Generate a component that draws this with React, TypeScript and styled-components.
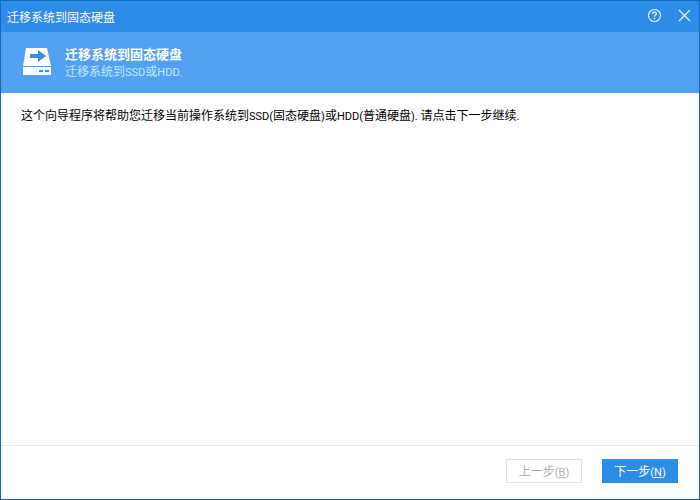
import React from 'react';
import styled, { createGlobalStyle } from 'styled-components';

const GlobalStyle = createGlobalStyle`
  *, *::before, *::after { box-sizing: border-box; }
  body {
    margin: 0;
    font-family: 'Noto Sans CJK SC', sans-serif;
    font-size: 12px;
    line-height: 16px;
    color: #000;
    background: #fff;
  }
`;

const Dialog = styled.div`
  display: flex;
  flex-direction: column;
  min-height: 100vh;
  border: 1px solid #0f69b4;
  background: #fff;
`;

const TitleBar = styled.header`
  display: flex;
  align-items: center;
  justify-content: space-between;
  height: 31px;
  padding: 0 7px 0 6px;
  background: #2d8ce7;
  color: #fff;
`;

const WindowTitle = styled.h1`
  margin: 0;
  font-size: 12px;
  font-weight: 400;
`;

const WindowControls = styled.div`
  display: flex;
  gap: 15px;
  padding-bottom: 2px;
`;

const IconButton = styled.button`
  display: flex;
  padding: 0;
  border: 0;
  background: none;
  color: #e4f7ff;
`;

const Banner = styled.section`
  display: flex;
  align-items: center;
  gap: 14px;
  height: 61px;
  padding: 0 21px;
  background: #52a0f2;
`;

const BannerText = styled.div`
  padding-top: 2px;
`;

const BannerTitle = styled.h2`
  margin: 0;
  font-size: 13px;
  line-height: 16px;
  font-weight: 700;
  color: #fff;
`;

const BannerNote = styled.p`
  margin: 0;
  line-height: 18px;
  color: #c0e9ff;
`;

const Latin = styled.span`
  font-family: Roboto, sans-serif;
  font-size: 11px;
`;

const Content = styled.main`
  flex: 1;
  padding: 14px 20px;
`;

const Message = styled.p`
  margin: 0;
`;

const Footer = styled.footer`
  display: flex;
  justify-content: flex-end;
  gap: 20px;
  padding: 13px 21px 16px;
  border-top: 1px solid #e5e8ea;
`;

const StepButton = styled.button<{ $primary?: boolean }>`
  min-width: 76px;
  height: 24px;
  padding: 2px 8px 0;
  border: 1px solid ${(p) => (p.$primary ? '#2d8ce7' : '#dfe3e8')};
  background: ${(p) => (p.$primary ? '#2d8ce7' : '#fff')};
  color: ${(p) => (p.$primary ? '#fff' : '#b0b0b0')};
  font: inherit;
`;

const HelpIcon = () => (
  <svg width="15" height="15" viewBox="0 0 15 15" fill="none" stroke="currentColor" aria-hidden="true">
    <circle cx="7.5" cy="7.5" r="6" strokeWidth="1.2" />
    <path d="M5.6 6V5.7C5.6 4.6 6.4 4.1 7.5 4.1s1.9.6 1.9 1.6c0 1.4-1.9 1.3-1.9 3" strokeWidth="1.4" />
    <path d="M7.5 9.7v1.4" strokeWidth="1.5" />
  </svg>
);

const CloseIcon = () => (
  <svg width="15" height="15" viewBox="0 0 15 15" fill="none" stroke="currentColor" strokeWidth="1.3" aria-hidden="true">
    <path d="M2 2l11 11M13 2l-11 11" />
  </svg>
);

const DriveIcon = () => (
  <svg width="29" height="29" viewBox="0 0 29 29" aria-hidden="true">
    <path d="M4 0h21l4 18H1z" fill="#fff" />
    <path d="M1 19h28v8H1z" fill="#fff" />
    <path d="M8 6h8V2l8 6-8 6v-4H8z" fill="#3c8ee0" />
    <path d="M17 22h4v2h-4zM23 22h4v2h-4z" fill="#3c8ee0" />
  </svg>
);

export default function App() {
  return (
    <>
      <GlobalStyle />
      <Dialog role="dialog" aria-labelledby="window-title">
        <TitleBar>
          <WindowTitle id="window-title">迁移系统到固态硬盘</WindowTitle>
          <WindowControls>
            <IconButton type="button" aria-label="帮助"><HelpIcon /></IconButton>
            <IconButton type="button" aria-label="关闭"><CloseIcon /></IconButton>
          </WindowControls>
        </TitleBar>
        <Banner>
          <DriveIcon />
          <BannerText>
            <BannerTitle>迁移系统到固态硬盘</BannerTitle>
            <BannerNote>迁移系统到<Latin>SSD</Latin>或<Latin>HDD.</Latin></BannerNote>
          </BannerText>
        </Banner>
        <Content>
          <Message>
            这个向导程序将帮助您迁移当前操作系统到<Latin>SSD(</Latin>固态硬盘<Latin>)</Latin>或<Latin>HDD(</Latin>普通硬盘<Latin>). </Latin>请点击下一步继续<Latin>.</Latin>
          </Message>
        </Content>
        <Footer>
          <StepButton type="button" disabled>上一步<Latin>(<u>B</u>)</Latin></StepButton>
          <StepButton type="button" $primary>下一步<Latin>(<u>N</u>)</Latin></StepButton>
        </Footer>
      </Dialog>
    </>
  );
}
